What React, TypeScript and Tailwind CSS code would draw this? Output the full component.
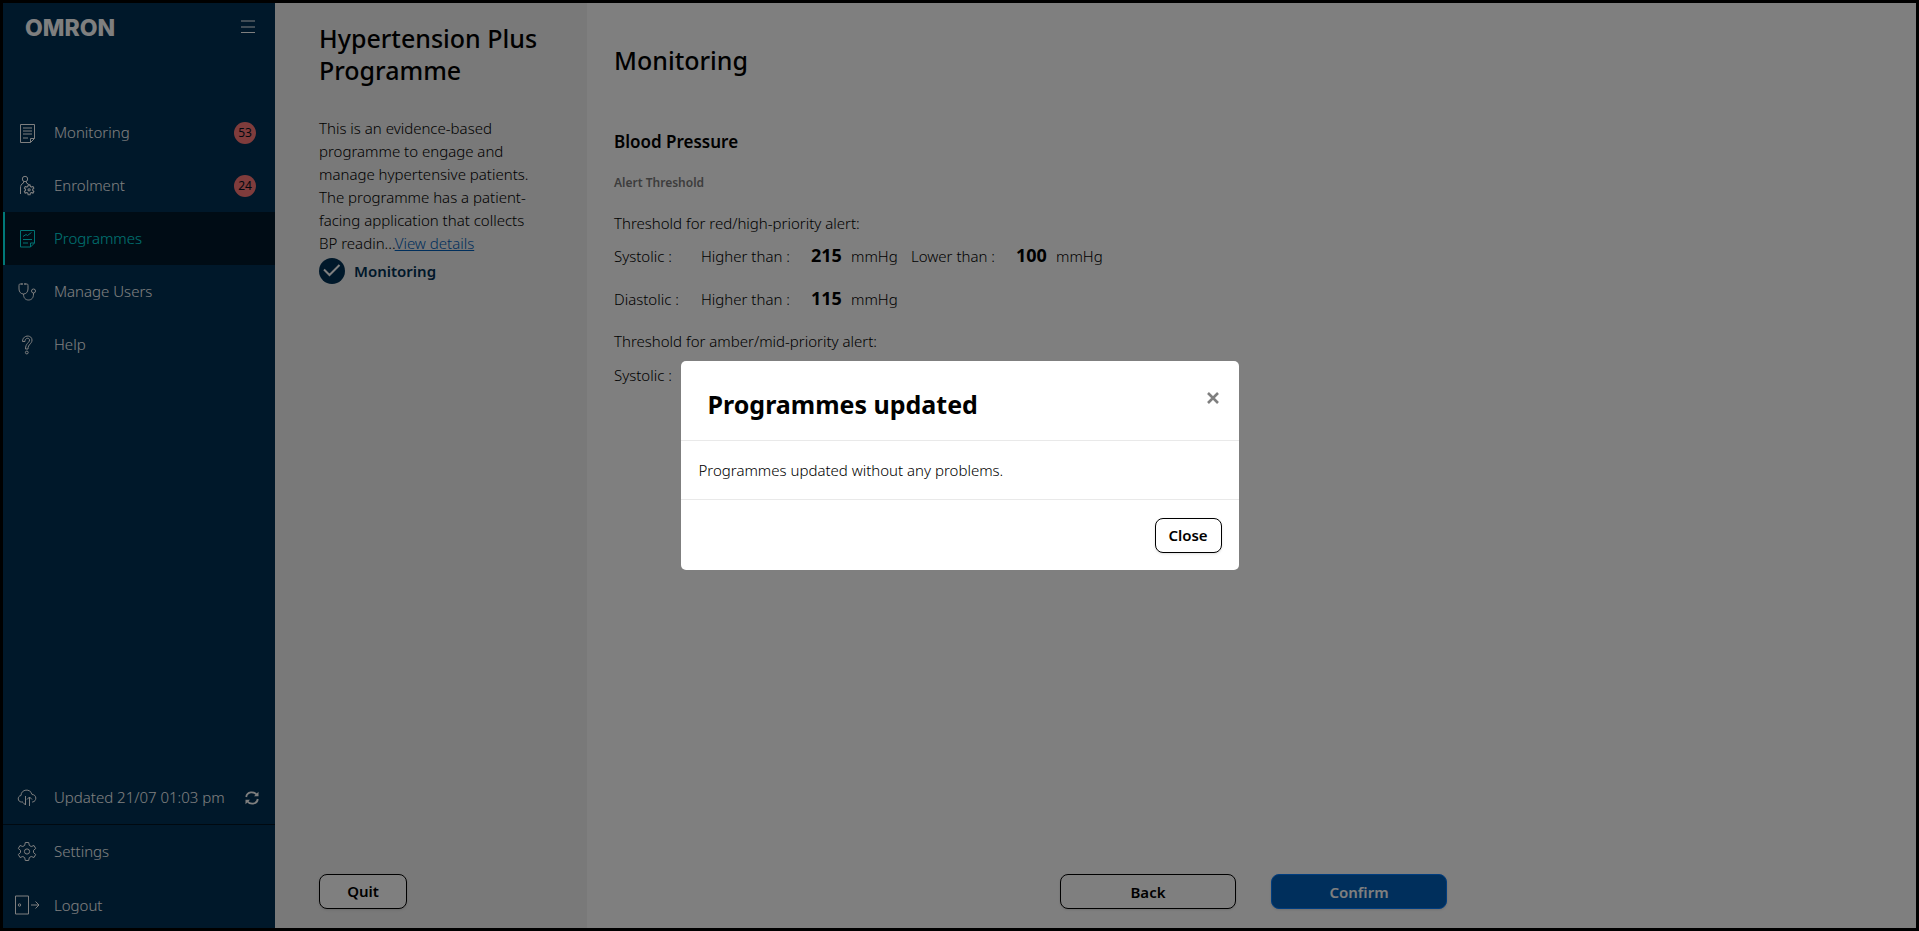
import type { ReactNode } from 'react'

type IconName = 'report' | 'enrol' | 'chart' | 'stethoscope' | 'help' | 'cloud' | 'gear' | 'logout'

const GEAR =
  'M10.3 2.5h3.4l.6 2.9 1.9 1.1 2.8-1 1.7 3-2.2 1.9v2.2l2.2 1.9-1.7 3-2.8-1-1.9 1.1-.6 2.9h-3.4l-.6-2.9-1.9-1.1-2.8 1-1.7-3 2.2-1.9v-2.2L3.3 8.500l1.700-3 2.800 1 1.900-1.100z'

const ICONS: Record<IconName, ReactNode> = {
  report: (
    <>
      <path d="M5.500 3.500h14v14l-4 4h-10zM19.500 17.500h-4v4" />
      <path d="M8 7h9M8 10h9M8 13h9M8 17h5" />
    </>
  ),
  enrol: (
    <>
      <circle cx="10" cy="5" r="2.700" />
      <path d="M8.500 7.500v1.500C6 10 5.500 12 5.500 14v6M11.500 7.500v1.500c1.500.5 2.500 1.500 3 2.500" />
      <g transform="translate(7.500 9.500) scale(.55)" strokeWidth="2">
        <path d={GEAR} />
        <circle cx="12" cy="11.500" r="2" />
      </g>
    </>
  ),
  chart: (
    <>
      <path d="M5.500 3.500h14v12.500l-4 4h-10zM19.500 16h-4v4" />
      <path d="M8 9.500l3-2 1.500 1 4-3M8 12.500h9M8 16h5" />
    </>
  ),
  stethoscope: (
    <>
      <path d="M6.500 4H5C4 4 4 5 4 6v3c0 3 2 5 4.500 5S13 12 13 9V6c0-1 0-2-1-2h-1.500M8.500 14c0 4 2 6 5 6s5-2 5-6v-1" />
      <circle cx="18.500" cy="11" r="2" />
      <circle cx="7" cy="4" r=".6" />
      <circle cx="10" cy="4" r=".6" />
    </>
  ),
  help: (
    <>
      <path d="M7.500 8.500c0-7 9.500-7 9.500-1.500 0 4-4 4-4 9h-2.500c0-6 4-6 4-9 0-2.500-4.500-2.500-4.500 1.500z" />
      <circle cx="11.800" cy="19.500" r="1.400" />
    </>
  ),
  cloud: (
    <>
      <path d="M8 16H6.500c-4 0-4.500-6-.5-6.500C6 3 15.500 2 17 8.500c5 0 5 7 .5 7.500H17" />
      <path d="M10.500 10v9m-2.500-2.500l2.500 2.500M14.500 20v-9m-2.500 2.500l2.500-2.500 2.500 2.500" />
    </>
  ),
  gear: (
    <>
      <path d={GEAR} />
      <circle cx="12" cy="11.500" r="2.600" />
    </>
  ),
  logout: (
    <>
      <path d="M.5 3h13v18H.5z" />
      <circle cx="4.500" cy="12" r="1.200" />
      <path d="M16 12h8M20.500 8.500L24 12l-3.500 3.500" />
    </>
  ),
}

function Icon({ name }: { name: IconName }) {
  return (
    <svg
      className="h-6 w-6 shrink-0 overflow-visible"
      viewBox="0 0 24 24"
      fill="none"
      stroke="currentColor"
      strokeWidth="1"
      strokeLinejoin="round"
      aria-hidden="true"
    >
      {ICONS[name]}
    </svg>
  )
}

const NAV: { label: string; icon: IconName; count?: number; active?: boolean }[] = [
  { label: 'Monitoring', icon: 'report', count: 53 },
  { label: 'Enrolment', icon: 'enrol', count: 24 },
  { label: 'Programmes', icon: 'chart', active: true },
  { label: 'Manage Users', icon: 'stethoscope' },
  { label: 'Help', icon: 'help' },
]

function Sidebar() {
  return (
    <aside className="flex w-[272px] shrink-0 flex-col bg-[#003054] text-white">
      <div className="flex h-[103px] items-start justify-between pt-[11px] pr-5 pl-[22px]">
        <span className="font-['Inter',sans-serif] text-[23px] leading-7 font-extrabold">OMRON</span>
        <button type="button" aria-label="Toggle menu" className="pt-[6px]">
          <svg className="h-[14px] w-[14px]" viewBox="0 0 14 14" stroke="currentColor" strokeWidth="1.200">
            <path d="M0 1h14M0 7h14M0 12.500h14" />
          </svg>
        </button>
      </div>

      <nav aria-label="Main">
        {NAV.map((item) => (
          <a
            key={item.label}
            href="#"
            aria-current={item.active ? 'page' : undefined}
            className={
              item.active
                ? 'flex h-[53px] items-center border-l-2 border-[#00f0f0] bg-[#00182a] pr-[19px] pl-[10px] text-[#00e6e6]'
                : 'flex h-[53px] items-center pr-[19px] pl-3'
            }
          >
            <Icon name={item.icon} />
            <span className="ml-[15px] flex-1">{item.label}</span>
            {item.count && (
              <span className="flex h-[22px] w-[22px] items-center justify-center rounded-full bg-[#ff7878] text-[12px] font-normal text-[#001020]">
                {item.count}
              </span>
            )}
          </a>
        ))}
      </nav>

      <div className="mt-auto">
        <div className="flex h-[54px] items-center border-b border-black/60 pr-4 pl-3">
          <Icon name="cloud" />
          <span className="ml-[15px] flex-1 whitespace-nowrap">Updated 21/07 01:03 pm</span>
          <button type="button" aria-label="Refresh">
            <svg className="h-[14px] w-[14px]" viewBox="0 0 14 14" fill="none" stroke="currentColor" strokeWidth="1.800">
              <path d="M1.200 6C2 .5 9 0 12 4M12.800 8C12 13.500 5 14 2 10" />
              <path d="M13.500.8v4.400H9zM.5 13.200V8.800H5z" fill="currentColor" stroke="none" />
            </svg>
          </button>
        </div>
        <a href="#" className="flex h-[53px] items-center pl-3">
          <Icon name="gear" />
          <span className="ml-[15px]">Settings</span>
        </a>
        <a href="#" className="flex h-[50px] items-center pt-1 pl-3">
          <Icon name="logout" />
          <span className="ml-[15px]">Logout</span>
        </a>
      </div>
    </aside>
  )
}

function ProgrammePanel() {
  return (
    <section className="flex w-[312px] shrink-0 flex-col bg-[#f2f2f2] pt-[19px] pr-11 pb-[19px] pl-11 text-black">
      <h1 className="text-[25px] leading-8 font-medium whitespace-nowrap">
        Hypertension Plus
        <br />
        Programme
      </h1>
      <p className="mt-[31px] leading-[23px] whitespace-nowrap">
        This is an evidence-based
        <br />
        programme to engage and
        <br />
        manage hypertensive patients.
        <br />
        The programme has a patient-
        <br />
        facing application that collects
        <br />
        BP readin...
        <a href="#" className="text-[#005eb8] underline">
          View details
        </a>
      </p>
      <div className="mt-[3px] flex items-center gap-[9px] font-semibold text-[#003054]">
        <svg className="h-[26px] w-[26px]" viewBox="0 0 26 26" fill="none" aria-hidden="true">
          <circle cx="13" cy="13" r="13" fill="currentColor" />
          <path d="M5 11.500l5.500 5.500L20.500 7" stroke="white" strokeWidth="2" />
        </svg>
        Monitoring
      </div>
      <button
        type="button"
        className="mt-auto h-[35px] w-[88px] rounded-lg border border-black bg-white font-semibold shadow-sm"
      >
        Quit
      </button>
    </section>
  )
}

function Limit({ label, value }: { label: string; value: number }) {
  return (
    <div className="flex items-baseline">
      <dt className="w-[110px] data-[low=true]:w-[105px]" data-low={label === 'Lower than'}>
        {label} :
      </dt>
      <dd className="flex w-[100px] items-baseline">
        <strong className="w-10 text-lg leading-6 font-bold">{value}</strong>
        mmHg
      </dd>
    </div>
  )
}

function MonitoringPanel() {
  return (
    <main className="flex min-w-0 flex-1 flex-col bg-white pt-[41px] pr-[23px] pb-[19px] pl-[27px] leading-6 text-black">
      <h2 className="text-[25px] leading-8 font-medium">Monitoring</h2>
      <h3 className="mt-[54px] text-[17px] leading-6 font-semibold">Blood Pressure</h3>
      <h4 className="mt-[17px] text-[12px] leading-6 font-semibold text-[#7a7a7a]">Alert Threshold</h4>
      <p className="mt-4">Threshold for red/high-priority alert:</p>
      <dl className="mt-2 flex items-baseline">
        <dt className="w-[87px]">Systolic :</dt>
        <Limit label="Higher than" value={215} />
        <Limit label="Lower than" value={100} />
      </dl>
      <dl className="mt-[18px] flex items-baseline">
        <dt className="w-[87px]">Diastolic :</dt>
        <Limit label="Higher than" value={115} />
      </dl>
      <p className="mt-[18px]">Threshold for amber/mid-priority alert:</p>
      <p className="mt-[10px]">Systolic :</p>

      <div className="mt-auto flex justify-center gap-[35px] font-semibold">
        <button type="button" className="h-[35px] w-[176px] rounded-lg border border-black bg-white shadow-sm">
          Back
        </button>
        <button
          type="button"
          className="h-[35px] w-[176px] rounded-lg border border-[#007aff] bg-[#005eb8] text-white shadow-sm"
        >
          Confirm
        </button>
      </div>
    </main>
  )
}

function UpdatedDialog() {
  return (
    <div className="fixed inset-0 z-50 flex items-center justify-center bg-black/50">
      <div
        role="dialog"
        aria-modal="true"
        aria-labelledby="dialog-title"
        className="w-[558px] rounded-[5px] bg-white text-black"
      >
        <header className="flex items-start justify-between border-b border-[#e9e9e9] pt-[27px] pr-4 pb-5 pl-[27px]">
          <h2 id="dialog-title" className="text-[25px] leading-8 font-bold">
            Programmes updated
          </h2>
          <button type="button" aria-label="Close dialog" className="p-1 text-[#7f7f7f]">
            <svg className="h-3 w-3" viewBox="0 0 12 12" stroke="currentColor" strokeWidth="2.600">
              <path d="M1 1l10 10M11 1L1 11" />
            </svg>
          </button>
        </header>
        <p className="border-b border-[#e9e9e9] px-[18px] py-[17px] leading-6">
          Programmes updated without any problems.
        </p>
        <footer className="flex justify-end px-[17px] pt-[18px] pb-[17px]">
          <button
            type="button"
            className="h-[35px] w-[67px] rounded-lg border border-black bg-white font-semibold shadow-sm"
          >
            Close
          </button>
        </footer>
      </div>
    </div>
  )
}

export default function App() {
  return (
    <div className="flex min-h-screen border-[3px] border-black font-['Noto_Sans','Open_Sans',sans-serif] text-[15px] font-light">
      <Sidebar />
      <ProgrammePanel />
      <MonitoringPanel />
      <UpdatedDialog />
    </div>
  )
}
